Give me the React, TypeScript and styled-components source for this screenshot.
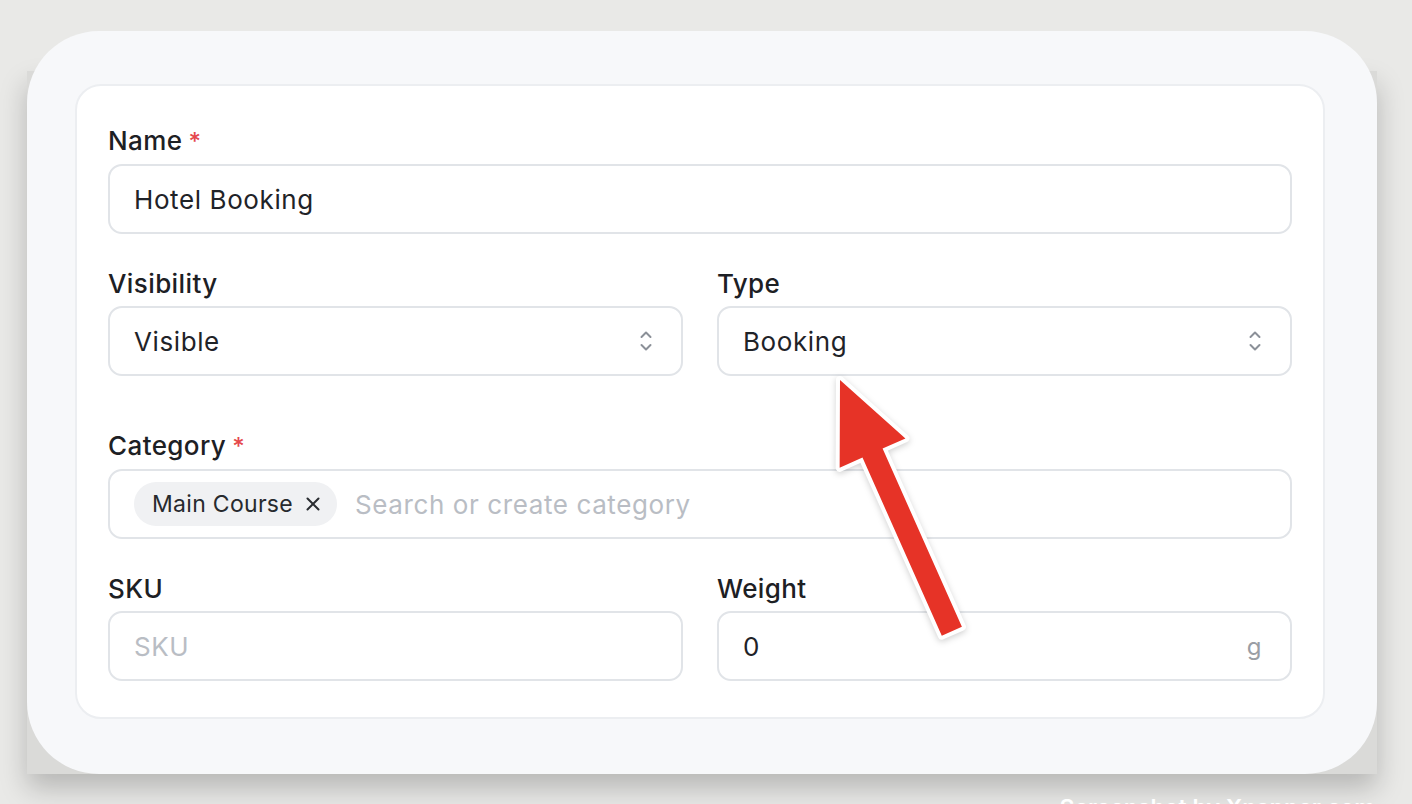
import styled, { createGlobalStyle } from "styled-components";

const GlobalStyle = createGlobalStyle`
    html, body {
        margin: 0;
        padding: 0;
        background: #e9e9e7;
        font-family: Inter, "Noto Sans", sans-serif;
        overflow: hidden;
    }
`

const Page = styled.div`
    width: 1412px;
    height: 804px;
    padding: 31px 0 0 27px;
    box-sizing: border-box;
    isolation: isolate;
`

const Window = styled.div`
    position: relative;
    width: 1350px;
    box-sizing: border-box;
    padding: 53px 52px 55px 48px;
    background: #f7f8fa;
    border-radius: 72px;

    // the square shadow the screenshot tool draws behind the window
    &::before {
        content: "";
        position: absolute;
        top: 40px;
        left: 0;
        right: 0;
        bottom: 0;
        background: #dadad8;
        box-shadow: 0 14px 26px rgba(0, 0, 0, 0.22);
        z-index: -1;
    }
`

const Panel = styled.div`
    background: #ffffff;
    border: 2px solid #eceef1;
    border-radius: 26px;
    padding: 40px 31px 36px 31px;
    display: flex;
    flex-direction: column;
`

const Row = styled.div<{ $gap: number }>`
    display: grid;
    grid-template-columns: 1fr 1fr;
    column-gap: 34px;
    margin-top: ${(p) => p.$gap}px;
`

const Field = styled.div<{ $gap?: number }>`
    display: flex;
    flex-direction: column;
    gap: 7px;
    margin-top: ${(p) => p.$gap || 0}px;
`

const Label = styled.label`
    font-size: 26px;
    line-height: 30px;
    letter-spacing: 0.4px;
    font-weight: 500;
    color: #1d2024;
`

const Star = styled.span`
    color: #e5484d;
    margin-left: 6px;
    font-size: 24px;
`

const Box = styled.div`
    height: 70px;
    box-sizing: border-box;
    border: 2px solid #e1e4e8;
    border-radius: 14px;
    display: flex;
    align-items: center;
    padding: 0 28px 0 24px;
    font-size: 26px;
    letter-spacing: 0.6px;
    color: #1f2328;
    background: #ffffff;
`

const Value = styled.span`
    flex: 1;
`

const Placeholder = styled.span`
    flex: 1;
    color: #b9bdc4;
`

const Unit = styled.span`
    color: #9a9ea5;
    font-size: 24px;
`

const Tag = styled.span`
    display: inline-flex;
    align-items: center;
    gap: 12px;
    height: 44px;
    padding: 0 16px 0 18px;
    margin-right: 18px;
    border-radius: 22px;
    background: #f0f1f3;
    font-size: 23px;
    letter-spacing: 0.3px;
    color: #272a2e;
`

const Footer = styled.div`
    margin-top: 20px;
    width: 1350px;
    text-align: right;
    padding-right: 2px;
    box-sizing: border-box;
    font-size: 23px;
    font-weight: 600;
    color: #ffffff;
`

const Arrow = styled.svg`
    position: absolute;
    left: 783px;
    top: 324px;
    filter: drop-shadow(0 2px 3px rgba(0, 0, 0, 0.18));
`

const UpDown = () => (
    <svg width="14" height="24" viewBox="0 0 14 24" fill="none" stroke="#8b9098" strokeWidth="2" strokeLinecap="round" strokeLinejoin="round">
        <path d="M2.5 8 L7 3.5 L11.5 8" />
        <path d="M2.5 16 L7 20.5 L11.5 16" />
    </svg>
)

const Cross = () => (
    <svg width="16" height="16" viewBox="0 0 16 16" fill="none" stroke="#2a2d31" strokeWidth="2" strokeLinecap="round">
        <path d="M2.5 2.5 L13.5 13.5 M13.5 2.5 L2.5 13.5" />
    </svg>
)

const App = () => {
    return (
        <Page>
            <GlobalStyle />
            <Window>
                <Panel>
                    <Field>
                        <Label>Name<Star>*</Star></Label>
                        <Box><Value>Hotel Booking</Value></Box>
                    </Field>
                    <Row $gap={35}>
                        <Field>
                            <Label>Visibility</Label>
                            <Box><Value>Visible</Value><UpDown /></Box>
                        </Field>
                        <Field>
                            <Label>Type</Label>
                            <Box><Value>Booking</Value><UpDown /></Box>
                        </Field>
                    </Row>
                    <Field $gap={55}>
                        <Label>Category<Star>*</Star></Label>
                        <Box>
                            <Tag>Main Course<Cross /></Tag>
                            <Placeholder>Search or create category</Placeholder>
                        </Box>
                    </Field>
                    <Row $gap={35}>
                        <Field>
                            <Label>SKU</Label>
                            <Box><Placeholder>SKU</Placeholder></Box>
                        </Field>
                        <Field>
                            <Label>Weight</Label>
                            <Box><Value>0</Value><Unit>g</Unit></Box>
                        </Field>
                    </Row>
                </Panel>
                <Arrow width="190" height="310" viewBox="0 0 190 310">
                    <g transform="translate(30,25) rotate(-24)">
                        <path
                            d="M0 0 L36 80 L11 80 L11 275 L-11 275 L-11 80 L-36 80 Z"
                            fill="#e63327"
                            stroke="#ffffff"
                            strokeWidth="8"
                            strokeLinejoin="round"
                            paintOrder="stroke"
                        />
                    </g>
                </Arrow>
            </Window>
            <Footer>Screenshot by Xnapper.com</Footer>
        </Page>
    )
}

export default App;
